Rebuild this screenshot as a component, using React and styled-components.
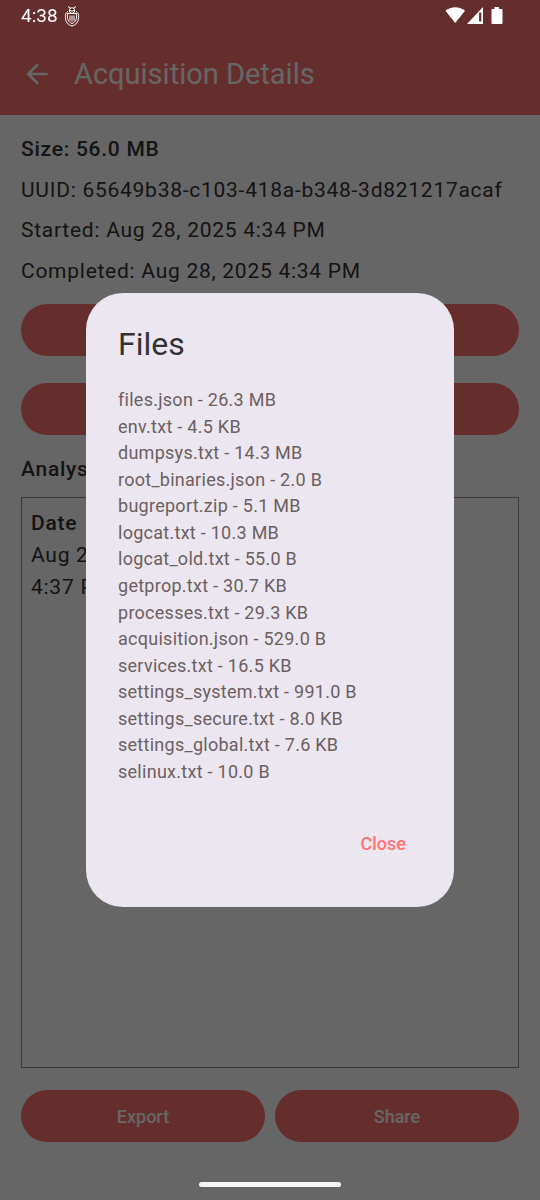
import React from 'react';
import styled, { createGlobalStyle } from 'styled-components';

const GlobalStyle = createGlobalStyle`
  * { box-sizing: border-box; }
  body { margin: 0; background: #fff; }
  body, button { font-family: Roboto, "Noto Sans", sans-serif; }
`;

const Screen = styled.div`
  display: flex;
  flex-direction: column;
  min-height: 100vh;
  color: #333;
  background: #fff;
`;

const AppBar = styled.header`
  display: flex;
  align-items: center;
  gap: 21px;
  height: 115px;
  padding: 32px 21px 0;
  background: #ff7171;
  color: #fff;
`;

const BackButton = styled.button`
  display: flex;
  padding: 0;
  border: 0;
  background: none;
  color: inherit;
`;

const ScreenTitle = styled.h1`
  margin: 0;
  font-size: 29px;
  font-weight: 400;
  line-height: 36px;
`;

const Content = styled.main`
  flex: 1;
  display: flex;
  flex-direction: column;
  padding: 14px 21px 58px;
  font-size: 21px;
  line-height: 32px;
  letter-spacing: 0.035em;
`;

const InfoList = styled.div`
  display: grid;
  grid-auto-rows: 1fr;
  align-items: center;
  min-height: 162px;
`;

const Info = styled.p`
  margin: 0;
  font-weight: ${(p) => (p.$strong ? 500 : 400)};
`;

const ActionStack = styled.div`
  display: grid;
  gap: 27px;
  margin-top: 13px;
`;

const ActionRow = styled.div`
  display: grid;
  grid-template-columns: 1fr 1fr;
  gap: 10px;
  margin-top: 22px;
`;

const PillButton = styled.button`
  height: 52px;
  border: 0;
  border-radius: 26px;
  background: #ff7171;
  color: #fff;
  font-size: 18px;
  font-weight: 500;
`;

const SectionTitle = styled.h2`
  margin: 18px 0 12px;
  font-size: 21px;
  font-weight: 500;
  line-height: 32px;
`;

const AnalysisBox = styled.section`
  flex: 1;
  padding: 9px;
  border: 1px solid #9a8a8d;
`;

const AnalysisTable = styled.table`
  width: 33%;
  border-collapse: collapse;

  th, td {
    padding: 0;
    text-align: left;
  }
  th { font-weight: 500; }
`;

const Scrim = styled.div`
  position: fixed;
  inset: 0;
  display: flex;
  align-items: center;
  justify-content: center;
  background: rgba(0, 0, 0, 0.6);
`;

const Dialog = styled.section`
  width: 368px;
  max-width: 90%;
  padding: 31px 32px 32px;
  border-radius: 37px;
  background: #ece6f0;
`;

const DialogTitle = styled.h2`
  margin: 0 0 23px;
  color: #333;
  font-size: 32px;
  font-weight: 400;
  line-height: 40px;
`;

const FileList = styled.ul`
  display: grid;
  grid-auto-rows: 1fr;
  align-items: center;
  min-height: 398px;
  margin: 0 0 27px;
  padding: 0;
  list-style: none;
  color: #6b5f60;
  font-size: 18px;
  line-height: 26px;
  letter-spacing: 0.015em;
`;

const DialogActions = styled.div`
  display: flex;
  justify-content: flex-end;
`;

const TextButton = styled.button`
  height: 63px;
  padding: 0 16px;
  border: 0;
  background: none;
  color: #ff7171;
  font-size: 18px;
  font-weight: 500;
`;

const StatusBar = styled.div`
  position: fixed;
  inset: 0 0 auto;
  display: flex;
  align-items: center;
  height: 32px;
  padding: 0 36px 0 21px;
  color: #fff;
  font-size: 19px;
  line-height: 24px;

  svg { display: block; }
`;

const StatusIcons = styled.div`
  display: flex;
  margin-left: auto;
`;

const Emblem = styled.svg`
  margin-left: 6px;
`;

const HomeHandle = styled.div`
  position: fixed;
  bottom: 13px;
  left: 50%;
  width: 142px;
  height: 5px;
  border-radius: 3px;
  background: #f5f5f5;
  transform: translateX(-50%);
`;

const files = [
  ['files.json', '26.3 MB'],
  ['env.txt', '4.5 KB'],
  ['dumpsys.txt', '14.3 MB'],
  ['root_binaries.json', '2.0 B'],
  ['bugreport.zip', '5.1 MB'],
  ['logcat.txt', '10.3 MB'],
  ['logcat_old.txt', '55.0 B'],
  ['getprop.txt', '30.7 KB'],
  ['processes.txt', '29.3 KB'],
  ['acquisition.json', '529.0 B'],
  ['services.txt', '16.5 KB'],
  ['settings_system.txt', '991.0 B'],
  ['settings_secure.txt', '8.0 KB'],
  ['settings_global.txt', '7.6 KB'],
  ['selinux.txt', '10.0 B'],
];

const ArrowBack = () => (
  <svg width="32" height="32" viewBox="0 0 24 24" fill="currentColor">
    <path d="M20 11H7.83l5.59-5.59L12 4l-8 8 8 8 1.41-1.41L7.83 13H20v-2z" />
  </svg>
);

const BeetleEmblem = () => (
  <Emblem width="16" height="22" viewBox="0 0 16 22" fill="none" stroke="currentColor" strokeWidth="1">
    <path d="M4 1.5 7 3.5M12 1.5 9 3.5M5 4.5 8 2.5 11 4.5 8 6.5Z" />
    <path d="M5 6.5 8 8.500 11 6.5M5.5 5v2M10.5 5v2" />
    <path d="M4 6.500C1.500 8 1 10 1.500 12.500M12 6.500C14.500 8 15 10 14.500 12.500" />
    <path d="M3.500 8.500H12.500M3.500 8.500C3 13.500 4 17 8 18.500C12 17 13 13.500 12.500 8.500" />
    <path d="M8 10.500V16.500M6 10.500V15.500M10 10.500V15.500" />
    <path d="M1.500 12.500C1.500 17 4 20 8 21C12 20 14.500 17 14.500 12.500" />
  </Emblem>
);

const StatusGlyphs = () => (
  <svg width="60" height="20" viewBox="0 0 60 20" fill="currentColor">
    <path d="M1.500 4.800C7-.1 15.500-.1 21 4.800L11.200 17Z" />
    <path fillRule="evenodd" d="M39 1V18H23ZM37.300 6.500H35.100V15.500H37.300Z" />
    <path d="M50.500 1h4.500v2h2.500q1 0 1 1v13q0 1-1 1h-9q-1 0-1-1V4q0-1 1-1h2Z" />
  </svg>
);

export default function App() {
  return (
    <>
      <GlobalStyle />
      <Screen>
        <AppBar>
          <BackButton><ArrowBack /></BackButton>
          <ScreenTitle>Acquisition Details</ScreenTitle>
        </AppBar>
        <Content>
          <InfoList>
            <Info $strong>Size: 56.0 MB</Info>
            <Info>UUID: 65649b38-c103-418a-b348-3d821217acaf</Info>
            <Info>Started: Aug 28, 2025 4:34 PM</Info>
            <Info>Completed: Aug 28, 2025 4:34 PM</Info>
          </InfoList>
          <ActionStack>
            <PillButton />
            <PillButton />
          </ActionStack>
          <SectionTitle>Analysis</SectionTitle>
          <AnalysisBox>
            <AnalysisTable>
              <thead>
                <tr><th scope="col">Date</th></tr>
              </thead>
              <tbody>
                <tr><td>Aug 28, 2025 4:37 PM</td></tr>
              </tbody>
            </AnalysisTable>
          </AnalysisBox>
          <ActionRow>
            <PillButton>Export</PillButton>
            <PillButton>Share</PillButton>
          </ActionRow>
        </Content>
      </Screen>
      <Scrim>
        <Dialog role="dialog" aria-modal="true" aria-labelledby="files-title">
          <DialogTitle id="files-title">Files</DialogTitle>
          <FileList>
            {files.map(([name, size]) => (
              <li key={name}>{`${name} - ${size}`}</li>
            ))}
          </FileList>
          <DialogActions>
            <TextButton>Close</TextButton>
          </DialogActions>
        </Dialog>
      </Scrim>
      <StatusBar>
        <span>4:38</span>
        <BeetleEmblem />
        <StatusIcons><StatusGlyphs /></StatusIcons>
      </StatusBar>
      <HomeHandle />
    </>
  );
}
